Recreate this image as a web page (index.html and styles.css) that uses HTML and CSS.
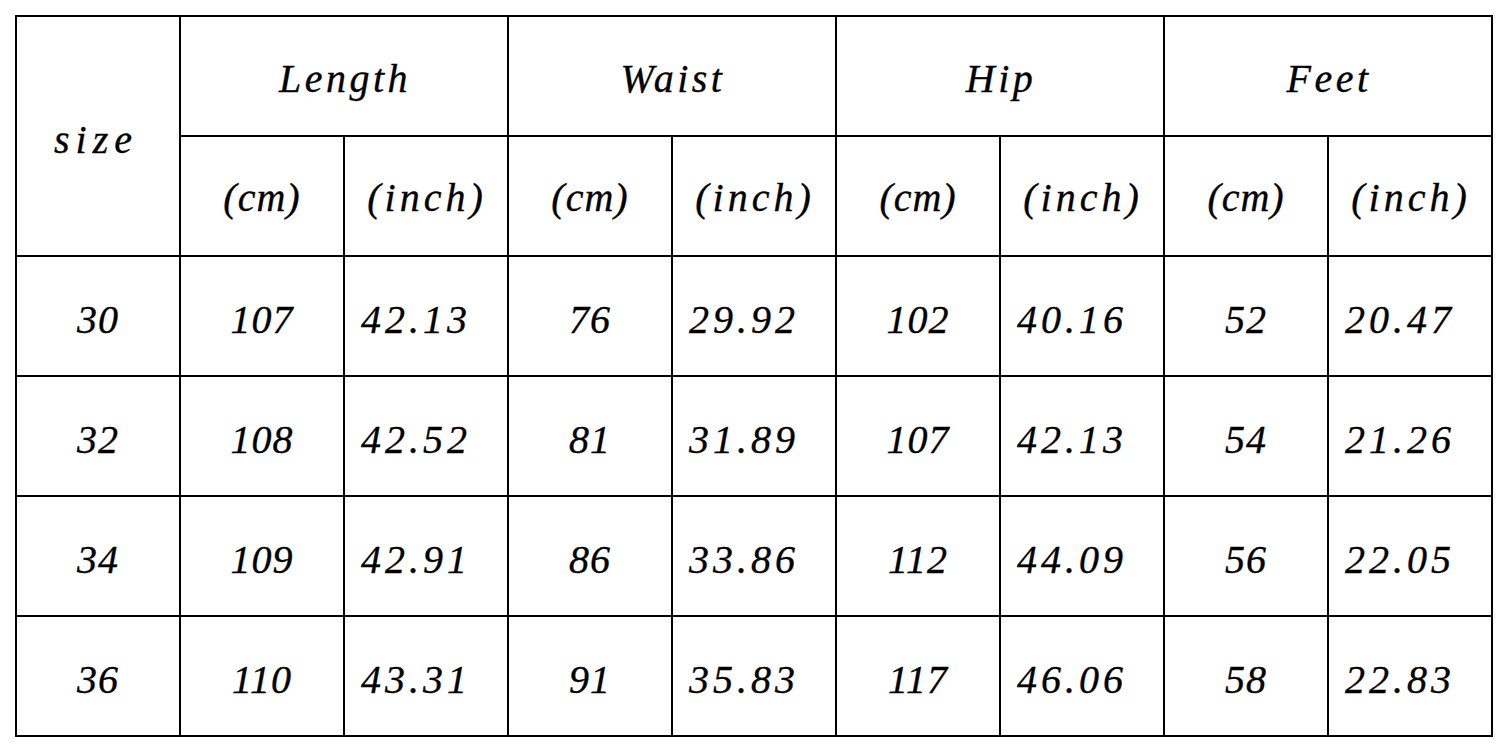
FILE: index.html
```html
<!DOCTYPE html>
<html>
<head>
<meta charset="utf-8">
<link rel="stylesheet" href="styles.css">
</head>
<body>
<table class="size-table">
  <colgroup>
    <col class="c"><col class="c"><col class="c"><col class="c"><col class="c"><col class="c"><col class="c"><col class="c"><col class="c">
  </colgroup>
  <tr>
    <td rowspan="2" class="lbl">size</td>
    <td colspan="2" class="grp">Length</td>
    <td colspan="2" class="grp">Waist</td>
    <td colspan="2" class="grp">Hip</td>
    <td colspan="2" class="grp">Feet</td>
  </tr>
  <tr>
    <td class="unit">(cm)</td><td class="unit in-u">(inch)</td>
    <td class="unit">(cm)</td><td class="unit in-u">(inch)</td>
    <td class="unit">(cm)</td><td class="unit in-u">(inch)</td>
    <td class="unit">(cm)</td><td class="unit in-u">(inch)</td>
  </tr>
  <tr>
    <td>30</td><td>107</td><td class="in">42.13</td><td>76</td><td class="in">29.92</td><td>102</td><td class="in">40.16</td><td>52</td><td class="in">20.47</td>
  </tr>
  <tr>
    <td>32</td><td>108</td><td class="in">42.52</td><td>81</td><td class="in">31.89</td><td>107</td><td class="in">42.13</td><td>54</td><td class="in">21.26</td>
  </tr>
  <tr>
    <td>34</td><td>109</td><td class="in">42.91</td><td>86</td><td class="in">33.86</td><td>112</td><td class="in">44.09</td><td>56</td><td class="in">22.05</td>
  </tr>
  <tr>
    <td>36</td><td>110</td><td class="in">43.31</td><td>91</td><td class="in">35.83</td><td>117</td><td class="in">46.06</td><td>58</td><td class="in">22.83</td>
  </tr>
</table>
</body>
</html>
```

FILE: styles.css
```css
html, body {
  margin: 0;
  padding: 0;
  background: #ffffff;
}
body {
  padding: 15px 0 0 15px;
}
.size-table {
  border-collapse: collapse;
  table-layout: fixed;
  width: 1478px;
  font-family: "Liberation Serif", "Times New Roman", serif;
  font-style: italic;
  font-size: 40px;
  color: #000;
  -webkit-text-stroke: 0.35px #000;
}
.size-table col.c {
  width: 164px;
}
.size-table tr {
  height: 120px;
}
.size-table td {
  border: 2px solid #000;
  padding: 7px 0 0 0;
  text-align: center;
  vertical-align: middle;
  letter-spacing: 1px;
  white-space: nowrap;
  line-height: 1;
}
.size-table td.lbl {
  letter-spacing: 6px;
  padding: 8px 4px 0 0;
}
.size-table td.grp {
  letter-spacing: 3.5px;
  padding: 6px 0 0 2px;
}
.size-table td.unit {
  letter-spacing: 1px;
  padding: 4px 0 0 0;
}
.size-table td.unit.in-u {
  letter-spacing: 4px;
  padding: 4px 0 0 2px;
}
.size-table td.in {
  letter-spacing: 4px;
  padding: 7px 20px 0 0;
}
```
